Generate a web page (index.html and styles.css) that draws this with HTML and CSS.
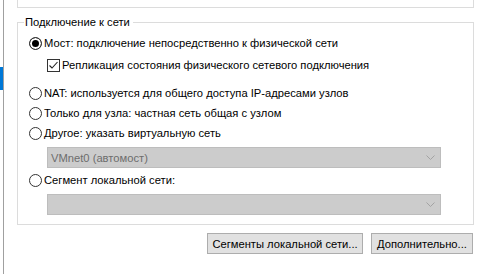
FILE: index.html
```html
<!DOCTYPE html>
<html lang="ru">
<head>
    <meta charset="UTF-8">
    <link rel="stylesheet" href="styles.css">
    <title>Подключение к сети</title>
</head>
<body>
    <div class="window">
        <!-- Край списка слева -->
        <div class="side">
            <div class="side-mark"></div>
        </div>

        <div class="content">
            <div class="top-box"></div>

            <fieldset class="group">
                <legend>Подключение к сети</legend>

                <label class="option first">
                    <span class="radio checked"></span>Мост: подключение непосредственно к физической сети
                </label>
                <label class="option sub">
                    <span class="check">
                        <svg width="11" height="11" viewBox="0 0 11 11"><path d="M1.5 5.5 L4 8 L9.5 2" fill="none" stroke="#222" stroke-width="1.1"/></svg>
                    </span>Репликация состояния физического сетевого подключения
                </label>
                <label class="option spaced">
                    <span class="radio"></span>NAT: используется для общего доступа IP-адресами узлов
                </label>
                <label class="option">
                    <span class="radio"></span>Только для узла: частная сеть общая с узлом
                </label>
                <label class="option">
                    <span class="radio"></span>Другое: указать виртуальную сеть
                </label>
                <div class="select">
                    <span class="select-text">VMnet0 (автомост)</span>
                    <svg class="chevron" width="9" height="5" viewBox="0 0 9 5"><path d="M0.5 0.5 L4.5 4.5 L8.5 0.5" fill="none" stroke="#a3a3a3" stroke-width="1"/></svg>
                </div>
                <label class="option after-select">
                    <span class="radio"></span>Сегмент локальной сети:
                </label>
                <div class="select">
                    <span class="select-text"></span>
                    <svg class="chevron" width="9" height="5" viewBox="0 0 9 5"><path d="M0.5 0.5 L4.5 4.5 L8.5 0.5" fill="none" stroke="#a3a3a3" stroke-width="1"/></svg>
                </div>
            </fieldset>

            <div class="buttons">
                <button class="btn btn-segments">Сегменты локальной сети...</button>
                <button class="btn btn-more">Дополнительно...</button>
            </div>
        </div>
    </div>
</body>
</html>
```

FILE: styles.css
```css
body {
    margin: 0;
    background: #fff;
    font-family: "Liberation Sans", Arial, sans-serif;
    font-size: 11.2px;
    color: #000;
}

.window {
    display: flex;
    height: 274px;
    overflow: hidden;
}

/* Полоска слева */
.side {
    width: 3px;
}

.side-mark {
    margin-top: 67px;
    height: 23px;
    background: #0078d7;
}

.content {
    flex: 1;
    border-left: 1px solid #a0a0a0;
    padding: 0 9px 0 13px;
}

.top-box {
    height: 7px;
    border: 1px solid #dcdcdc;
    border-top: none;
}

/* Группа "Подключение к сети" */
.group {
    margin: 7px 0 0 0;
    padding: 0 0 9px 6px;
    border: 1px solid #dcdcdc;
}

.group legend {
    padding: 0 3px 0 1px;
    line-height: 15px;
    height: 15px;
}

.option {
    display: flex;
    align-items: center;
    height: 20px;
    padding-left: 5px;
    white-space: nowrap;
}

.option.first {
    margin-top: 3px;
}

.option.sub {
    margin-top: 2px;
    padding-left: 23px;
}

.option.spaced {
    margin-top: 8px;
}

.option.after-select {
    margin-top: 2px;
}

.radio {
    width: 11px;
    height: 11px;
    border: 1px solid #333;
    border-radius: 50%;
    margin-right: 2px;
    flex-shrink: 0;
}

.radio.checked {
    background: #000;
    box-shadow: inset 0 0 0 2px #fff;
}

.check {
    width: 11px;
    height: 11px;
    border: 1px solid #333;
    margin-right: 2px;
    display: flex;
    flex-shrink: 0;
}

/* Выпадающие списки (неактивные) */
.select {
    margin: 4px 0 0 23px;
    width: 384px;
    height: 19px;
    border: 1px solid #bdbdbd;
    background: #cccccc;
    display: flex;
    align-items: center;
    justify-content: space-between;
    padding: 0 5px 0 3px;
}

.select-text {
    color: #6d6d6d;
}

.buttons {
    display: flex;
    justify-content: flex-end;
    gap: 8px;
    margin-top: 8px;
    padding-right: 1px;
}

.btn {
    height: 21px;
    padding: 0;
    border: 1px solid #adadad;
    background: #e1e1e1;
    font-family: inherit;
    font-size: 11.2px;
    color: #000;
    white-space: nowrap;
}

.btn-segments {
    width: 156px;
}

.btn-more {
    width: 102px;
}
```
